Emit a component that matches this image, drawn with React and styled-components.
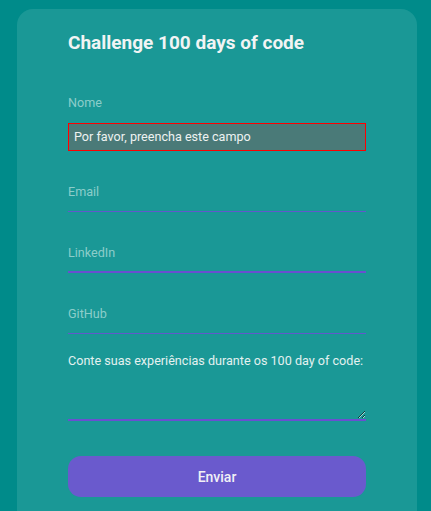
import React from "react";
import styled, { createGlobalStyle } from "styled-components";

const Global = createGlobalStyle`
  html, body { margin: 0; padding: 0; background: #008b8a; }
  body { font-family: Roboto, "Noto Sans", Arial, sans-serif; }
  * { box-sizing: border-box; }
`;

const Page = styled.div`
  padding: 9px 14px 0 17px;
  height: 511px;
  overflow: hidden;
`;

const Card = styled.form`
  width: 400px;
  min-height: 560px;
  background: #1a9896;
  border-radius: 16px;
  padding: 23px 51px 40px;
  display: flex;
  flex-direction: column;
`;

const Title = styled.h1`
  margin: 0 0 29px;
  font-size: 19px;
  line-height: 22px;
  font-weight: 700;
  color: #f1f4f4;
`;

const Field = styled.label`
  display: block;
  width: 298px;
  height: 40px;
  margin-bottom: ${(p) => (p.$invalid ? 0 : 21)}px;
  border-bottom: ${(p) => (p.$focus ? 2 : 1)}px solid
    ${(p) => (p.$invalid ? "transparent" : p.$focus ? "#6a4fd0" : "#6258cc")};
`;

const Input = styled.input`
  display: block;
  width: 100%;
  height: 39px;
  padding: 0;
  border: none;
  background: transparent;
  font-family: inherit;
  font-size: 12.6px;
  color: #f1f4f4;
  outline: none;
  &::placeholder { color: #8ccdca; opacity: 1; }
`;

const ErrorBox = styled.div`
  width: 298px;
  height: 28px;
  margin-bottom: 21px;
  border: 1px solid #ff0000;
  background: #4a7a78;
  color: #eef2f1;
  font-size: 12.6px;
  line-height: 26px;
  padding-left: 5px;
`;

const TextArea = styled.textarea`
  display: block;
  width: 298px;
  height: 68px;
  margin: -2px 0 35px;
  padding: 0;
  border: none;
  border-bottom: 2px solid #6a4fd0;
  background: transparent;
  font-family: inherit;
  font-size: 12.6px;
  line-height: 15px;
  color: #f1f4f4;
  outline: none;
  &::placeholder { color: #e3f1f0; opacity: 1; }
`;

const Button = styled.button`
  width: 298px;
  height: 41px;
  border: none;
  border-radius: 13px;
  background: #6a5acd;
  color: #f1f1f6;
  font-family: inherit;
  font-size: 14px;
  font-weight: 500;
  cursor: pointer;
`;

export default function App() {
  return (
    <Page>
      <Global />
      <Card onSubmit={(e) => e.preventDefault()}>
        <Title>Challenge 100 days of code</Title>
        <Field $invalid>
          <Input placeholder="Nome" />
        </Field>
        <ErrorBox>Por favor, preencha este campo</ErrorBox>
        <Field>
          <Input placeholder="Email" />
        </Field>
        <Field $focus>
          <Input placeholder="LinkedIn" />
        </Field>
        <Field>
          <Input placeholder="GitHub" />
        </Field>
        <TextArea placeholder="Conte suas experiências durante os 100 day of code:" />
        <Button type="submit">Enviar</Button>
      </Card>
    </Page>
  );
}
